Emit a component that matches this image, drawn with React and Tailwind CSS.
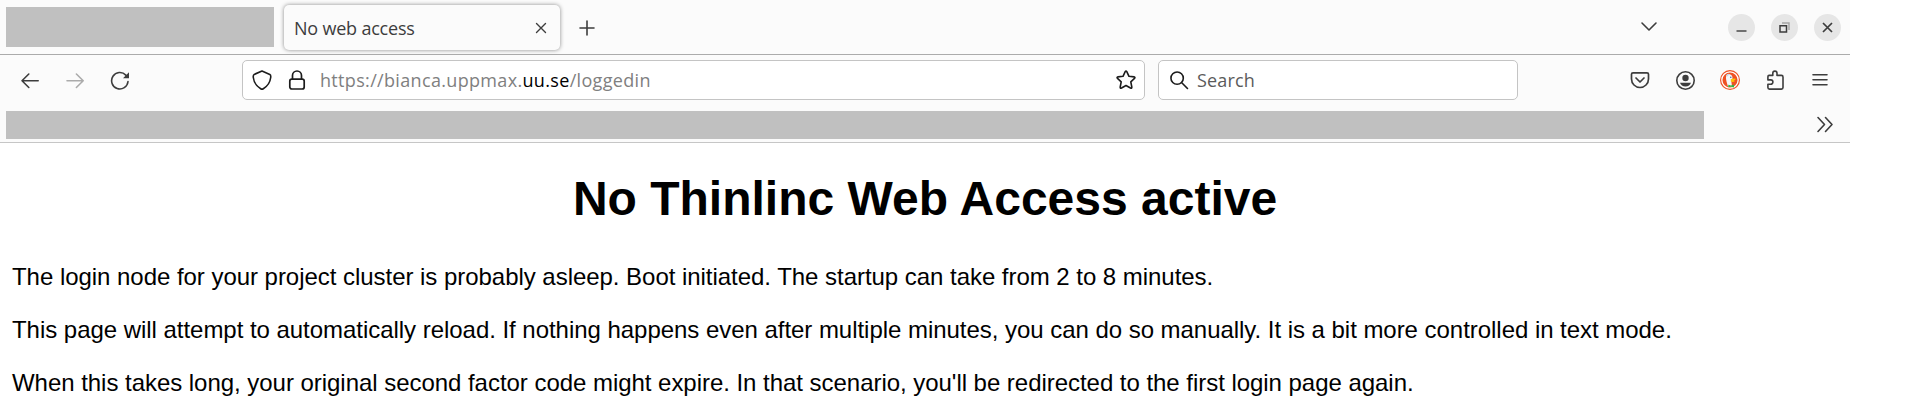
const ui = "font-['Open_Sans','Noto_Sans',sans-serif]";

function Stroke({ className, children, viewBox = "0 0 20 20", width = 1.6 }) {
  return (
    <svg className={`block shrink-0 ${className}`} viewBox={viewBox} fill="none" stroke="currentColor" strokeWidth={width} strokeLinecap="round" strokeLinejoin="round">
      {children}
    </svg>
  );
}

function TabStrip() {
  return (
    <div className="flex h-[54px] items-start pl-1.5 pr-[9px] text-[#3d3d3d]">
      <div className="mt-[7px] h-10 w-[268px] bg-[#c0c0c0]" />
      <div className="ml-2.5 mt-[5px] flex h-[45px] w-[276px] items-center rounded-[5px] bg-[#fbfbfb] pl-2.5 pr-[13.5px] shadow-[0_0_4px_rgba(0,0,0,0.45)]">
        <span className="mt-px whitespace-nowrap text-[18px] font-[450] tracking-[-0.2px]">No web access</span>
        <Stroke className="ml-auto size-[12px]" viewBox="0 0 12 12" width={1.4}>
          <path d="M1.5 1.5l9 9M10.5 1.5l-9 9" />
        </Stroke>
      </div>
      <Stroke className="ml-[17px] mt-[18px] size-5">
        <path d="M10 3v14M3 10h14" />
      </Stroke>
      <Stroke className="ml-auto mt-4 size-5">
        <path d="M3 7l7 7 7-7" />
      </Stroke>
      <div className="ml-[69px] mt-3.5 flex gap-4">
        <div className="flex size-[27px] items-center justify-center rounded-full bg-[#e6e6e6]">
          <svg className="size-[27px]" viewBox="0 0 27 27" stroke="currentColor" strokeWidth="1.4"><path d="M8.5 17h10" /></svg>
        </div>
        <div className="flex size-[27px] items-center justify-center rounded-full bg-[#e6e6e6]">
          <svg className="size-[27px]" viewBox="0 0 27 27" fill="none" stroke="currentColor">
            <path d="M11 9h7v7" strokeWidth="1.4" stroke="#a5a5a5" />
            <path d="M9 11.7h6.5v6.2H9z" strokeWidth="1.5" />
          </svg>
        </div>
        <div className="flex size-[27px] items-center justify-center rounded-full bg-[#e6e6e6]">
          <svg className="size-[27px]" viewBox="0 0 27 27" stroke="currentColor" strokeWidth="1.7"><path d="M9 9l9 9M18 9l-9 9" /></svg>
        </div>
      </div>
    </div>
  );
}

function NavBar() {
  return (
    <div className="flex h-14 items-start pl-5 pt-[5px] text-[#3d3d3d]">
      <div className="flex h-10 items-center">
        <Stroke className="size-5"><path d="M18.2 10.700H2M8.800 4l-6.800 6.700 6.800 6.800" /></Stroke>
        <Stroke className="ml-[25px] size-5 text-[#ababab]"><path d="M2 10.700h16.200M11.400 4l6.800 6.700-6.800 6.800" /></Stroke>
        <svg className="ml-[25px] size-5 shrink-0" viewBox="0 0 20 20" fill="none" stroke="currentColor" strokeWidth="1.6">
          <path d="M18 11.500a8.200 8.200 0 1 1-2.200-6.400l1.400 1.600" strokeLinecap="round" />
          <path d="M19 2.200v6h-6z" fill="currentColor" stroke="none" />
        </svg>
      </div>
      <div className="ml-[112px] flex h-10 w-[903px] items-center rounded-[5px] border border-[#c4c4c4] bg-white px-2 text-[#1c1c1c]">
        <Stroke className="ml-px size-5" width={1.6}>
          <path d="M10 1 L2.2 4.4 C1.2 5 1.1 6 1.3 7.500 C2 13 5 16.500 8.700 18.700 Q10 19.500 11.300 18.700 C15 16.500 18 13 18.700 7.500 C18.900 6 18.800 5 17.800 4.400Z" />
        </Stroke>
        <Stroke className="ml-[15px] size-5" width={1.7}>
          <rect x="2.800" y="9.200" width="14.400" height="9.800" rx="2" />
          <path d="M5.500 9V5.500a4.500 4.500 0 0 1 9 0V9" />
        </Stroke>
        <span className="ml-[13px] whitespace-nowrap text-[18px] tracking-[0.33px] text-[#808080]">https://bianca.uppmax.<span className="text-black">uu.se</span>/loggedin</span>
        <Stroke className="ml-auto size-5" width={1.6}>
          <path d="M9.2 1.6Q10 .3 10.8 1.6l2.2 4.700 5 .6q1.600.3.5 1.500l-3.700 3.500 1 5.100q.2 1.700-1.300 1L10 15.500l-4.500 2.500q-1.500.700-1.300-1l1-5.100L1.500 8.400Q.400 7.200 2 6.900l5-.600z" />
        </Stroke>
      </div>
      <div className="ml-[13px] flex h-10 w-[360px] items-center rounded-[5px] border border-[#c4c4c4] bg-white pl-[11px] text-[#1c1c1c]">
        <Stroke className="size-[19px]" width={1.7}>
          <circle cx="7.5" cy="7.500" r="6.500" />
          <path d="M12.400 12.400l6 6" />
        </Stroke>
        <span className="ml-2 text-[18px] font-[450] tracking-[0.15px] text-[#5b5b5b]">Search</span>
      </div>
      <div className="ml-[112px] flex h-10 items-center">
        <Stroke className="size-5" width={1.700}>
          <path d="M3 2.800h14q1.500 0 1.500 1.500V9a8.500 8.500 0 0 1-17 0V4.300q0-1.500 1.500-1.500zM6 8l4 4 4-4" />
        </Stroke>
        <svg className="ml-[25px] size-5 shrink-0" viewBox="0 0 20 20">
          <circle cx="10.500" cy="10.500" r="8.700" fill="none" stroke="currentColor" strokeWidth="1.600" />
          <circle cx="10.500" cy="8" r="3.200" fill="currentColor" />
          <path d="M5 12.800h11q-1.200 3.700-5.500 3.700T5 12.800z" fill="currentColor" />
        </svg>
        <svg className="ml-[25px] size-5 shrink-0" viewBox="0 0 20 20">
          <circle cx="10" cy="10" r="10" fill="#ef5124" />
          <circle cx="10" cy="10" r="8.200" fill="none" stroke="#fff" strokeWidth="1.300" />
          <path d="M8 16.500C6.800 12.500 5.800 9.500 6 7.300 6.200 5 7.700 3.800 9.500 4.200c2.300.500 3.200 2 3 4.300L11.300 11l.700 5.500z" fill="#f4f7fa" />
          <path d="M5.800 6q1-2.300 3-2.300l1.200.900q-2 .300-2.700 1.900z" fill="#c9d8e5" />
          <circle cx="10.800" cy="7.200" r=".7" fill="#345b83" />
          <path d="M10.800 9.300q2.700-1.300 5-.600-.600 1.800-2.300 2l1.500.600q-1.800 1.300-4.200.300z" fill="#fdc20b" />
          <path d="M8.300 14.800l2.700.700 3-1v2.900l-3-.7-2.700.5z" fill="#35b340" />
        </svg>
        <Stroke className="ml-[25px] size-5" width={1.600}>
          <path d="M2.900 6.700q0-1.300 1.200-1.300h3.700V3.200a2 2 0 0 1 4.200 0v2.200h4.400q1.600 0 1.600 1.600v10.500q0 1.600-1.600 1.600H4.500q-1.600 0-1.600-1.500v-3.300h2.800a2.200 2.200 0 0 0 0-4.400h-2.800z" />
        </Stroke>
        <Stroke className="ml-[25px] size-5">
          <path d="M3 4.800h14M3 9.800h14M3 14.800h14" />
        </Stroke>
      </div>
    </div>
  );
}

export default function App() {
  return (
    <div className="h-[415px] w-full overflow-hidden bg-white">
      <div className="w-[1850px]">
        <header className={`h-[143px] border-b border-[#c6c6c6] bg-[#fbfbfb] ${ui}`}>
          <TabStrip />
          <div className="h-px bg-[#ababab]" />
          <NavBar />
          <div className="flex items-start pl-1.5 text-[#3d3d3d]">
            <div className="h-7 w-[1698px] bg-[#c0c0c0]" />
            <Stroke className="ml-[111px] mt-[2.500px] size-5"><path d="M3 3.500l6.500 7-6.500 7M10.500 3.500l6.500 7-6.500 7" /></Stroke>
          </div>
        </header>
        <main className="px-3 font-['Liberation_Sans',Arial,sans-serif] text-2xl leading-[27px] text-black">
          <h1 className="mt-[29px] whitespace-nowrap text-center text-5xl leading-[54px] font-bold">No Thinlinc Web Access active</h1>
          <div className="mt-[37px] flex flex-col gap-[26px] whitespace-nowrap tracking-[-0.037px]">
            <p>The login node for your project cluster is probably asleep. Boot initiated. The startup can take from 2 to 8 minutes.</p>
            <p>This page will attempt to automatically reload. If nothing happens even after multiple minutes, you can do so manually. It is a bit more controlled in text mode.</p>
            <p>When this takes long, your original second factor code might expire. In that scenario, you'll be redirected to the first login page again.</p>
          </div>
        </main>
      </div>
    </div>
  );
}
